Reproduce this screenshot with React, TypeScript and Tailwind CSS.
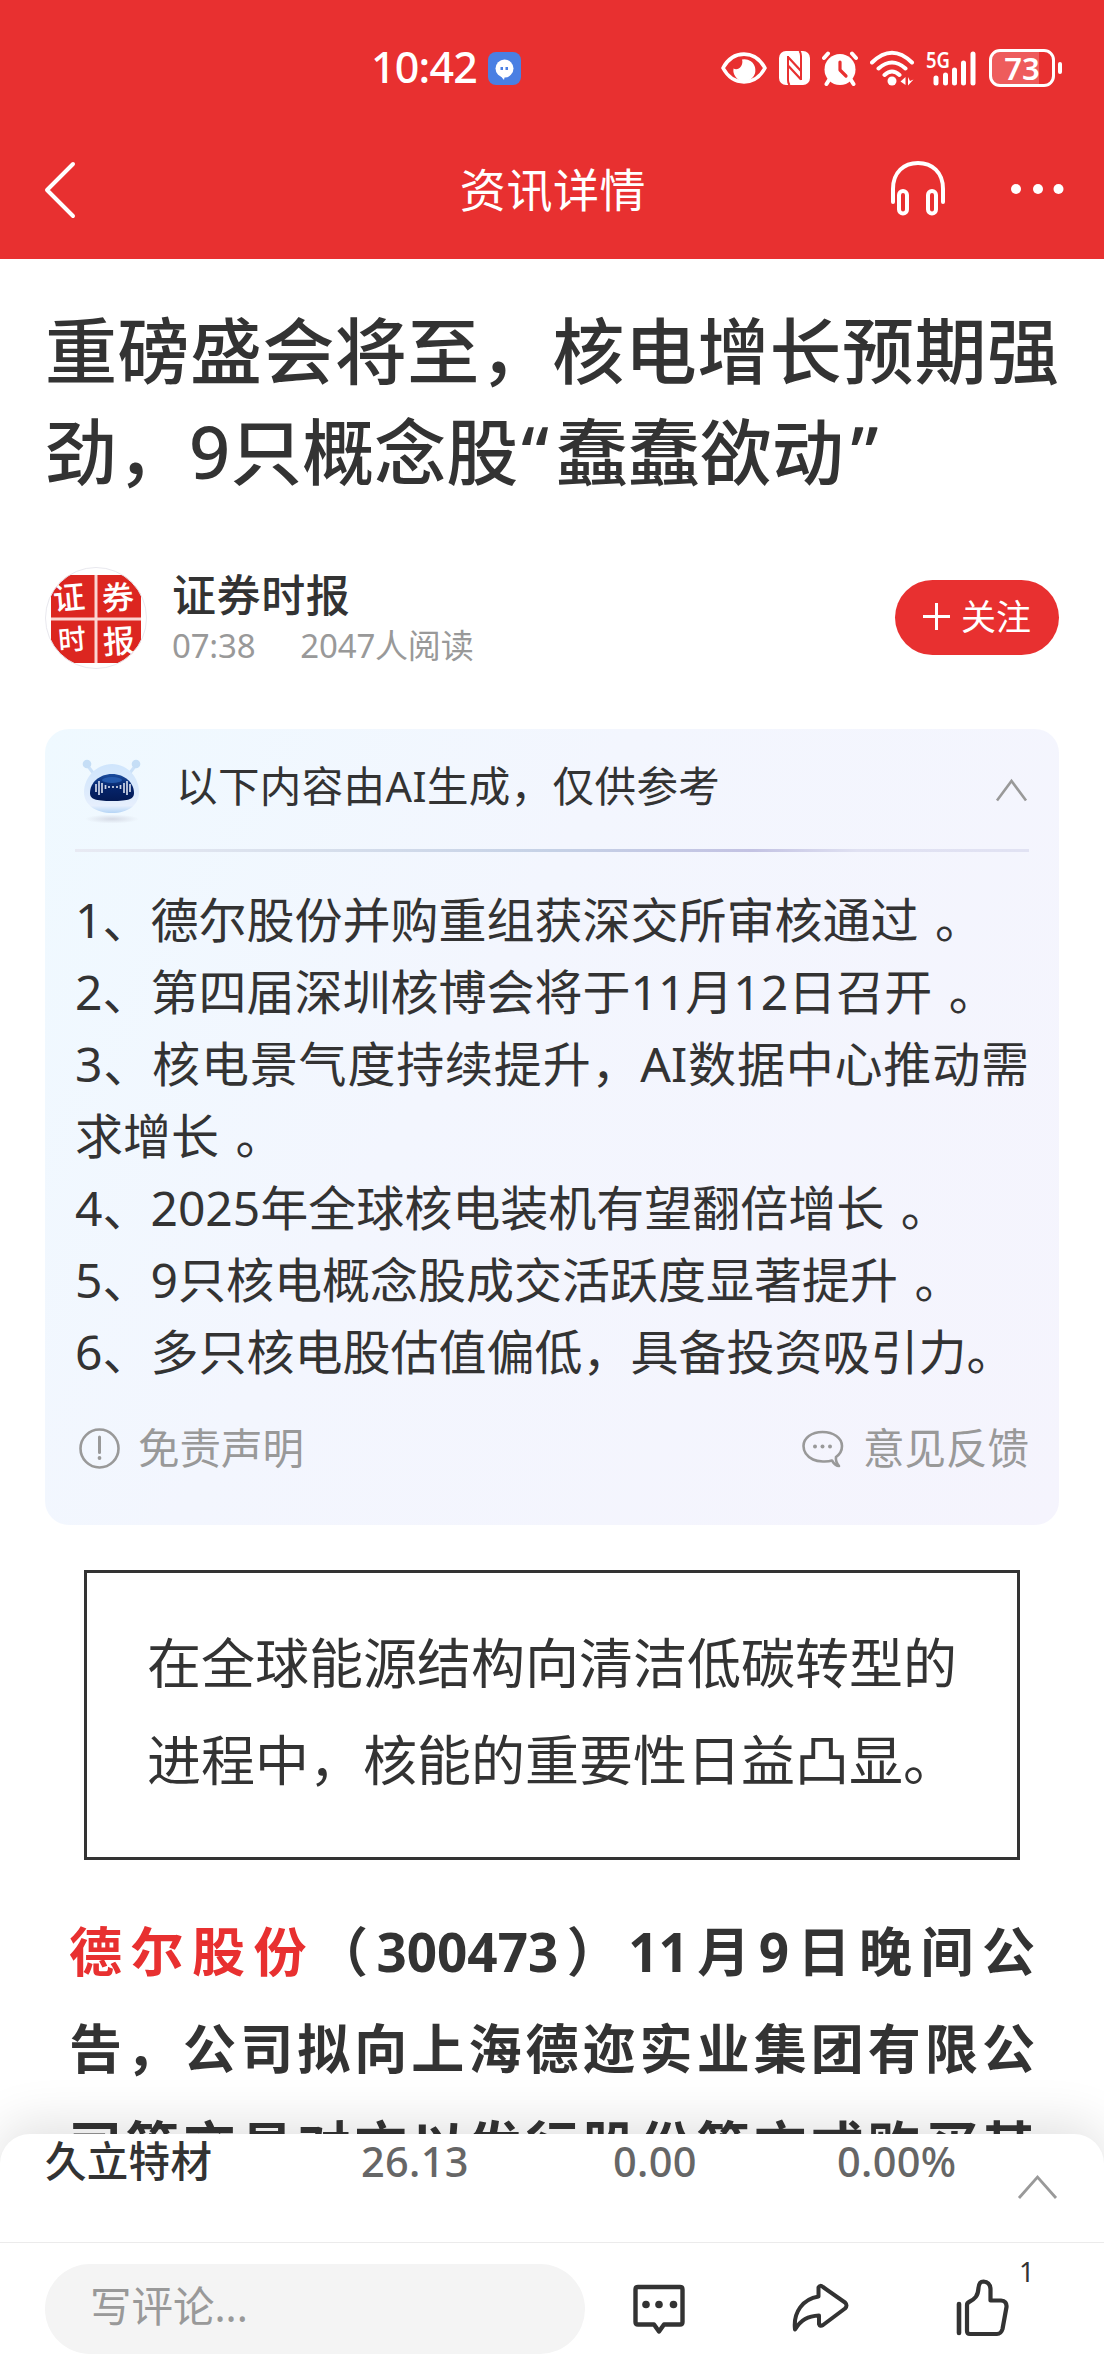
import type { ReactNode } from 'react';

const summary = [
  '1、德尔股份并购重组获深交所审核通过 。',
  '2、第四届深圳核博会将于11月12日召开 。',
  '3、核电景气度持续提升，AI数据中心推动需',
  '求增长 。',
  '4、2025年全球核电装机有望翻倍增长 。',
  '5、9只核电概念股成交活跃度显著提升 。',
  '6、多只核电股估值偏低，具备投资吸引力。',
];

const quote = ['在全球能源结构向清洁低碳转型的', '进程中，核能的重要性日益凸显。'];

function JustifiedLine({ children }: { children: ReactNode }) {
  return <div className="whitespace-nowrap [text-align-last:justify]">{children}</div>;
}

function StatusBar() {
  return (
    <div className="flex h-[136px] items-center">
      <span className="-mt-[3px] ml-[371px] w-[117px] whitespace-nowrap text-[43px] font-medium leading-none tracking-[-0.8px]">10:42</span>
      <svg width="33" height="33" viewBox="0 0 33 33">
        <rect width="33" height="33" rx="8" fill="#4a7fe3" />
        <circle cx="16.5" cy="16.5" r="9" fill="#fff" />
        <path d="M11 22l5 6 1-5z" fill="#fff" />
        <rect x="12.5" y="15" width="2.5" height="3" fill="#4a7fe3" />
        <rect x="17.5" y="15" width="2.5" height="3" fill="#4a7fe3" />
      </svg>

      {/* Eye comfort */}
      <svg className="ml-[200px]" width="46" height="34" viewBox="0 0 46 34">
        <path d="M2 17C12-1.500 34-1.500 44 17C34 35.500 12 35.500 2 17Z" fill="none" stroke="#fff" strokeWidth="3.600" strokeLinejoin="round" />
        <path d="M21 8.500A11 11 0 1 1 12.500 17.500C17 20.500 23 14.500 21 8.500Z" fill="#fff" />
      </svg>

      {/* NFC */}
      <svg className="ml-3" width="32" height="34" viewBox="0 0 32 34">
        <rect width="31" height="34" rx="7" fill="#fff" />
        <path d="M9 5V29Q9 32 10.500 34M22 29V5Q22 2 20.500 0" fill="none" stroke="#e83030" strokeWidth="2" />
        <path d="M9.500 6.500L22 20M9.500 15L22 28.500" stroke="#e83030" strokeWidth="2.200" />
      </svg>

      {/* Alarm */}
      <svg className="ml-[11px]" width="36" height="35" viewBox="0 0 36 35">
        <circle cx="18" cy="18.500" r="15.500" fill="#fff" />
        <path d="M2 7L6 2.500M34 7L30 2.500M7 29L4.500 33M29 29L31.500 33" stroke="#fff" strokeWidth="4" strokeLinecap="round" />
        <path d="M18 11V19L24 25" fill="none" stroke="#e83030" strokeWidth="3.200" strokeLinecap="round" strokeLinejoin="round" />
      </svg>

      {/* Wi-Fi */}
      <svg className="ml-3" width="45" height="36" viewBox="0 0 45 36">
        <path d="M2 12.500Q22 -7 42 12.500M8.500 18.500Q22 6.500 35.500 18.500M14.500 25Q22 18 29.500 25" fill="none" stroke="#fff" strokeWidth="4" strokeLinecap="round" />
        <circle cx="22" cy="31" r="4.500" fill="#fff" />
        <path d="M35.500 27V35L30.500 31.500ZM38 27V35.500L43.500 29.500L40 31Z" fill="#fff" />
      </svg>

      {/* Signal */}
      <svg className="ml-[10px]" width="53" height="38" viewBox="-1 0 53 38" overflow="visible">
        <text x="0" y="19" fill="#fff" fontSize="22" fontWeight="600" textLength="24" lengthAdjust="spacingAndGlyphs">5G</text>
        <path d="M10 29V34M19.500 26V34M28.500 21V34M37.500 14V34M47 5V34" stroke="#fff" strokeWidth="5" strokeLinecap="round" />
      </svg>

      {/* Battery */}
      <div className="ml-[11px] flex items-center">
        <div className="flex h-[38px] w-[66px] items-center rounded-[11px] border-[3px] border-white bg-[linear-gradient(90deg,#ee5c5c_79%,transparent_79%)]">
          <span className="w-full text-center text-[31px] font-semibold leading-none">73</span>
        </div>
        <div className="ml-[3px] h-[12px] w-1 rounded-full bg-white" />
      </div>
    </div>
  );
}

function NavBar() {
  return (
    <div className="grid h-[123px] grid-cols-[1fr_auto_1fr] items-start pt-[20px]">
      <svg className="ml-[42px] mt-[4px]" width="36" height="60" viewBox="0 0 36 60">
        <path d="M31 4L5 30L31 56" fill="none" stroke="#fff" strokeWidth="4" strokeLinecap="round" strokeLinejoin="round" />
      </svg>
      <h2 className="pl-[2px] text-[46px] leading-[66px] tracking-[0.6px]">资讯详情</h2>
      <div className="flex items-center justify-end pr-[40px] pt-[4px]">
        <svg width="56" height="56" viewBox="0 0 56 56">
          <path d="M3 42V29C3 12 14 3 28 3S53 12 53 29V42" fill="none" stroke="#fff" strokeWidth="4" strokeLinecap="round" />
          <rect x="9" y="31" width="8" height="22.500" rx="4" fill="none" stroke="#fff" strokeWidth="4" />
          <rect x="38" y="31" width="8" height="22.500" rx="4" fill="none" stroke="#fff" strokeWidth="4" />
        </svg>
        <svg className="ml-[64px]" width="54" height="56" viewBox="0 0 54 56">
          <circle cx="6" cy="29" r="5" fill="#fff" />
          <circle cx="28" cy="29" r="5" fill="#fff" />
          <circle cx="48.500" cy="29" r="5" fill="#fff" />
        </svg>
      </div>
    </div>
  );
}

function Avatar() {
  return (
    <svg width="102" height="102" viewBox="0 0 102 102">
      <defs>
        <clipPath id="avatar">
          <circle cx="51" cy="51" r="50.500" />
        </clipPath>
      </defs>
      <g clipPath="url(#avatar)">
        <rect x="6" y="8" width="90" height="88" fill="#dc2620" />
        <path d="M51 8V96M6 52H96" stroke="#fbd5d2" strokeWidth="3" />
        <g fill="#fff" fontSize="32" fontWeight="500">
          <text x="8" y="42" transform="rotate(-5 26 30)">证</text>
          <text x="57" y="42" transform="rotate(-5 74 30)">券</text>
          <text x="13" y="83" fontSize="28" transform="rotate(-5 26 73)">时</text>
          <text x="58" y="86" transform="rotate(-4 74 75)">报</text>
        </g>
      </g>
      <circle cx="51" cy="51" r="50.500" fill="none" stroke="#e8e8ee" />
    </svg>
  );
}

function Robot() {
  return (
    <svg width="60" height="66" viewBox="0 0 60 66">
      <defs>
        <linearGradient id="shell" x1="0" y1="0" x2="0" y2="1">
          <stop offset="0" stopColor="#cfe5fc" />
          <stop offset="0.5" stopColor="#dbeafc" />
          <stop offset="0.85" stopColor="#e6effd" />
          <stop offset="1" stopColor="#b5d5f6" />
        </linearGradient>
        <linearGradient id="visor" x1="0" y1="0" x2="0" y2="1">
          <stop offset="0" stopColor="#1a4c9e" />
          <stop offset="0.5" stopColor="#06246a" />
          <stop offset="1" stopColor="#041a55" />
        </linearGradient>
        <radialGradient id="ground">
          <stop offset="0" stopColor="#d5dae5" />
          <stop offset="1" stopColor="#d5dae5" stopOpacity="0" />
        </radialGradient>
      </defs>
      <ellipse cx="30" cy="60" rx="27" ry="4.500" fill="url(#ground)" />
      <path d="M5 6L12 15M54 6L47 15" stroke="#cbe1f8" strokeWidth="3" />
      <circle cx="5" cy="5" r="4.300" fill="#c5def6" />
      <circle cx="54" cy="5" r="4.300" fill="#c5def6" />
      <path d="M30 5C46 5 57 19 57 33C57 46 46 54 30 54S2 46 2 33C2 19 14 5 30 5Z" fill="url(#shell)" />
      <path d="M30 15C43 15 52 24 52 34C52 40 47 42 30 42S8 40 8 34C8 24 17 15 30 15Z" fill="url(#visor)" />
      <ellipse cx="30" cy="21" rx="10" ry="3" fill="#2c66bd" opacity="0.700" />
      <path d="M14 25V33M17 22V36M20 24V34M23.500 26V30M27 27V29M31 27V29M35 27V29M38.500 26V30M42 24V34M45 22V36M48 25V33" stroke="#cfd6e8" strokeWidth="1.700" />
    </svg>
  );
}

function AiSummary() {
  return (
    <section className="mt-[60px] h-[796px] rounded-[24px] bg-[linear-gradient(120deg,#eff9ff_0%,#f3f6fe_40%,#f5f4fd_100%)] px-[30px]">
      <div className="flex h-[120px] items-start pt-[30px]">
        <div className="ml-[7px] w-[94px]">
          <Robot />
        </div>
        <span className="-mt-[1px] flex-1 text-[41.500px] leading-[56px] tracking-[0.4px]">以下内容由AI生成，仅供参考</span>
        <svg className="mt-[18px]" width="34" height="26" viewBox="0 0 34 26">
          <path d="M2 23.500L16.500 4L31 23.500" fill="none" stroke="#999" strokeWidth="2.600" />
        </svg>
      </div>
      <div className="h-[3px] bg-[linear-gradient(90deg,#e8eaf3_0%,#d7dfec_25%,#c5d1e6_50%,#c3c2e3_71%,#e0e1f2_82%,#e1e2f3_100%)]" />
      <div className="mt-[32px] text-[48px] leading-[72px] [word-spacing:4px]">
        {summary.map((line, idx) =>
          idx === 2 ? <JustifiedLine key={idx}>{line}</JustifiedLine> : <p key={idx} className="whitespace-nowrap">{line}</p>
        )}
      </div>
      <div className="mt-[30px] flex items-center text-[41.500px] leading-[60px] text-[#999]">
        <svg className="ml-[4px] mr-[18px] mt-[2px]" width="41" height="41" viewBox="0 0 41 41">
          <circle cx="20.500" cy="20.500" r="19" fill="none" stroke="#999" strokeWidth="2.600" />
          <path d="M20.500 9V24.500" stroke="#999" strokeWidth="3" strokeLinecap="round" />
          <circle cx="20.500" cy="30" r="1.900" fill="#999" />
        </svg>
        <span className="flex-1">免责声明</span>
        <svg className="mr-[19px] mt-[2px]" width="42" height="38" viewBox="0 0 42 38">
          <path d="M30 30.500C26 32 16 32 11 29.500C5 26.500 1.500 21.500 1.500 16C1.500 8 9.500 2 20.500 2S40 8 40 16C40 20.500 37.500 24.500 34 27C33.500 30 34.500 33 37 36C34 36 32 34 30 30.500Z" fill="none" stroke="#999" strokeWidth="2.600" strokeLinejoin="round" />
          <circle cx="13" cy="16.500" r="2" fill="#999" />
          <circle cx="20.500" cy="16.500" r="2" fill="#999" />
          <circle cx="28" cy="16.500" r="2" fill="#999" />
        </svg>
        <span>意见反馈</span>
      </div>
    </section>
  );
}

function Article() {
  return (
    <article className="min-h-0 flex-1 overflow-hidden px-[45px] pt-[41px]">
      <h1 className="text-[72px] font-medium leading-[101.400px]">
        <JustifiedLine>重磅盛会将至，核电增长预期强</JustifiedLine>
        <div className="whitespace-nowrap">
          劲，9只概念股<span className="ml-[3px] tracking-[7px]">“</span>蠢蠢欲动<span className="ml-[7px]">”</span>
        </div>
      </h1>

      <div className="mt-[64px] flex h-[102px] items-center">
        <Avatar />
        <div className="ml-[25px] flex-1">
          <p className="text-[44px] font-medium leading-[56px] tracking-[0.6px]">证券时报</p>
          <p className="flex gap-[45px] text-[33px] leading-[46px] tracking-[-0.2px] text-[#999]">
            <span>07:38</span>
            <span>2047人阅读</span>
          </p>
        </div>
        <button className="flex h-[75px] w-[164px] items-center rounded-full bg-[#e83030] pb-[2px] pl-[28px] text-[35px] text-white">
          <svg className="mr-[11px]" width="27" height="27" viewBox="0 0 27 27">
            <path d="M13.500 0V27M0 13.500H27" stroke="#fff" strokeWidth="3" />
          </svg>
          关注
        </button>
      </div>

      <AiSummary />

      <blockquote className="mx-[39px] mt-[45px] h-[290px] border-[3px] border-[#333] px-[60px] pt-[42px] text-[54px] leading-[97.200px]">
        {quote.map((line) => (
          <p key={line} className="whitespace-nowrap">{line}</p>
        ))}
      </blockquote>

      <div className="mx-[24px] mt-[43px] text-[53px] font-bold leading-[97.200px]">
        <JustifiedLine>
          <span className="text-[#e83030]">德尔股份</span>（300473）11月9日晚间公
        </JustifiedLine>
        <JustifiedLine>告，公司拟向上海德迩实业集团有限公</JustifiedLine>
        <JustifiedLine>司等交易对方以发行股份等方式购买其</JustifiedLine>
      </div>
    </article>
  );
}

function StockSheet() {
  return (
    <div className="relative -mt-[30px] flex h-[108px] items-start rounded-t-[30px] bg-white pl-[45px] text-[41.500px] leading-[54px] tracking-[0.3px] shadow-[0_-10px_50px_rgba(0,0,0,0.120)]">
      <span className="w-[316px] font-medium">久立特材</span>
      <span className="w-[252px] font-medium text-[#666]">26.13</span>
      <span className="w-[224px] font-medium text-[#666]">0.00</span>
      <span className="flex-1 font-medium text-[#666]">0.00%</span>
      <svg className="mr-[46px] mt-[39px]" width="42" height="28" viewBox="0 0 42 28">
        <path d="M3 25L21.500 4L40 25" fill="none" stroke="#999" strokeWidth="2.800" />
      </svg>
    </div>
  );
}

function CommentBar() {
  return (
    <footer className="relative flex h-[134px] items-start border-t border-[#ebebeb] bg-white pl-[45px] pt-[21px]">
      <div className="flex h-[90px] w-[540px] items-center rounded-full bg-[#f4f4f4] pb-[5px] pl-[45px] text-[41.500px] text-[#999]">写评论...</div>

      {/* Comments */}
      <svg className="ml-[47px] mt-[18px]" width="54" height="54" viewBox="0 0 54 54">
        <path d="M6 5H48Q50.500 5 50.500 7.500V40Q50.500 42.500 48 42.500H32L27 49.500L22 42.500H6Q3.500 42.500 3.500 40V7.500Q3.500 5 6 5Z" fill="none" stroke="#333" strokeWidth="4.400" strokeLinejoin="round" />
        <circle cx="14" cy="22.500" r="3.800" fill="#333" />
        <circle cx="27" cy="22.500" r="3.800" fill="#333" />
        <circle cx="41.500" cy="22.500" r="3.800" fill="#333" />
      </svg>

      {/* Share */}
      <svg className="ml-[105px] mt-[18px]" width="58" height="54" viewBox="0 0 58 54">
        <path d="M27.500 5.500Q29 2.500 32 5L54 20.500Q57 23.500 54 26.500L32 43Q29 45 28 42V33.500C17 34 10 37.500 4 47.500C2 30 12 17 27.500 14.500Z" fill="none" stroke="#333" strokeWidth="4" strokeLinejoin="round" />
      </svg>

      {/* Like */}
      <svg className="ml-[106px] mt-[15px]" width="54" height="58" viewBox="0 0 54 58">
        <path d="M4 25V54" stroke="#333" strokeWidth="4.600" strokeLinecap="round" />
        <path d="M12 26Q12 24 14 23C20 20 23 17 23.500 9Q24 2.500 28.500 2.500Q35 3 35.500 10V21.500H46Q52 22 51.500 28L47.500 50Q46 55 42 55H15Q12 55 12 52Z" fill="none" stroke="#333" strokeWidth="4.200" strokeLinejoin="round" />
      </svg>
      <span className="-mt-[10px] ml-[10px] text-[27px] leading-[36px]">1</span>
    </footer>
  );
}

export default function App() {
  return (
    <div className="flex h-[2376px] w-[1104px] flex-col overflow-hidden bg-white font-['Noto_Sans','Noto_Sans_CJK_SC',sans-serif] text-[#333]">
      <header className="h-[259px] shrink-0 bg-[#e83030] text-white">
        <StatusBar />
        <NavBar />
      </header>
      <Article />
      <StockSheet />
      <CommentBar />
    </div>
  );
}
